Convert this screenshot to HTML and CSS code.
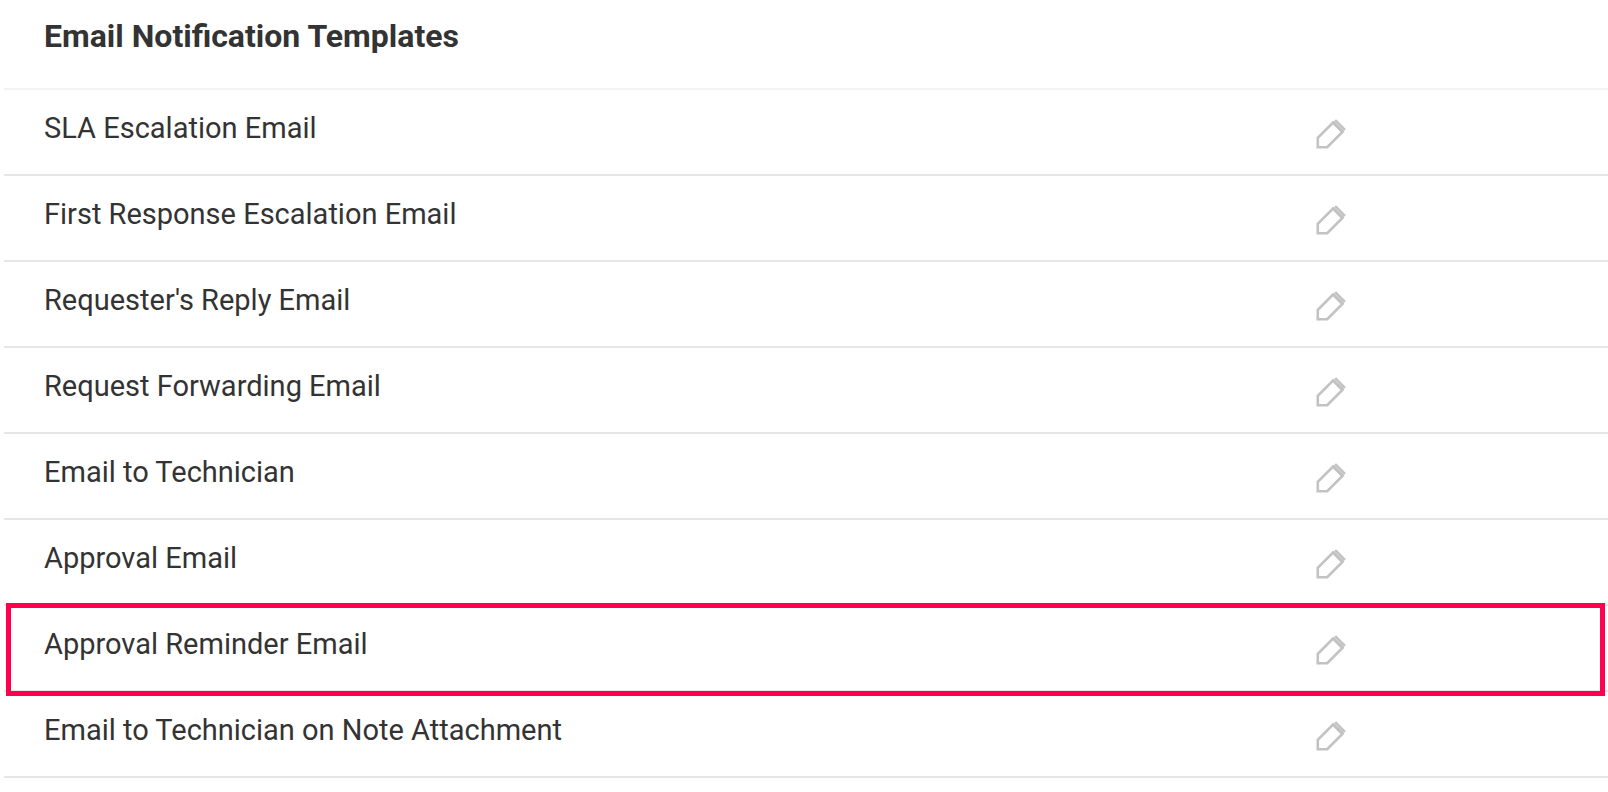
FILE: index.html
```html
<!DOCTYPE html>
<html lang="en">
<head>
    <meta charset="UTF-8">
    <meta name="viewport" content="width=device-width, initial-scale=1.0">
    <title>Email Notification Templates</title>
    <link rel="stylesheet" href="styles.css">
</head>
<body>
<!-- pencil icon shared by all rows -->
<svg class="sprite" aria-hidden="true">
    <symbol id="pencil" viewBox="0 0 32 32">
        <path d="M2.8 29.2V19.8L18 4.6L27.4 14L12.2 29.2Z" stroke-width="2.6"/>
        <path d="M20.2 2L30 11.8" stroke-width="2.4"/>
        <path d="M18.2 3.4L28.6 13.8" stroke-width="2"/>
    </symbol>
</svg>

<table class="templates">
    <colgroup>
        <col class="col-name">
        <col>
    </colgroup>
    <thead>
        <tr>
            <th colspan="2" scope="col">Email Notification Templates</th>
        </tr>
    </thead>
    <tbody>
        <tr>
            <td class="name">SLA Escalation Email</td>
            <td class="action"><button type="button" class="edit" aria-label="Edit SLA Escalation Email"><svg><use href="#pencil"/></svg></button></td>
        </tr>
        <tr>
            <td class="name">First Response Escalation Email</td>
            <td class="action"><button type="button" class="edit" aria-label="Edit First Response Escalation Email"><svg><use href="#pencil"/></svg></button></td>
        </tr>
        <tr>
            <td class="name">Requester's Reply Email</td>
            <td class="action"><button type="button" class="edit" aria-label="Edit Requester's Reply Email"><svg><use href="#pencil"/></svg></button></td>
        </tr>
        <tr>
            <td class="name">Request Forwarding Email</td>
            <td class="action"><button type="button" class="edit" aria-label="Edit Request Forwarding Email"><svg><use href="#pencil"/></svg></button></td>
        </tr>
        <tr>
            <td class="name">Email to Technician</td>
            <td class="action"><button type="button" class="edit" aria-label="Edit Email to Technician"><svg><use href="#pencil"/></svg></button></td>
        </tr>
        <tr>
            <td class="name">Approval Email</td>
            <td class="action"><button type="button" class="edit" aria-label="Edit Approval Email"><svg><use href="#pencil"/></svg></button></td>
        </tr>
        <tr class="highlight">
            <td class="name">Approval Reminder Email</td>
            <td class="action"><button type="button" class="edit" aria-label="Edit Approval Reminder Email"><svg><use href="#pencil"/></svg></button></td>
        </tr>
        <tr>
            <td class="name">Email to Technician on Note Attachment</td>
            <td class="action"><button type="button" class="edit" aria-label="Edit Email to Technician on Note Attachment"><svg><use href="#pencil"/></svg></button></td>
        </tr>
    </tbody>
</table>
</body>
</html>
```

FILE: styles.css
```css
body {
    margin: 0;
    padding-left: 4px;
    background-color: #fff;
    color: #333;
    font-family: Roboto, "Liberation Sans", sans-serif;
    font-size: 29px;
    line-height: 36px;
}
.sprite {
    display: none;
}
.templates {
    width: 100%;
    border-spacing: 0;
    table-layout: fixed;
}
.col-name {
    width: 81%;
}
.templates th {
    padding: 18px 40px 34px;
    border-bottom: 2px solid #f5f2f4;
    font-size: 32px;
    font-weight: 700;
    text-align: left;
}
.templates td {
    border-bottom: 2px solid #e6e6e6;
    vertical-align: top;
}
.templates .name {
    padding: 20px 40px 28px;
}
.templates .action {
    padding: 28px 12px 24px;
}
.edit {
    display: block;
    width: 32px;
    height: 32px;
    padding: 0;
    border: none;
    background: none;
    cursor: pointer;
}
.edit svg {
    display: block;
    width: 32px;
    height: 32px;
    fill: none;
    stroke: #c2c2c2;
}
.edit:hover svg {
    stroke: #888;
}
.highlight {
    position: relative;
}
/* frame drawn over the row borders */
.highlight .name::after {
    content: "";
    position: absolute;
    inset: -3px 3px -4px 2px;
    border: 5px solid #ff0050;
    pointer-events: none;
}
```
